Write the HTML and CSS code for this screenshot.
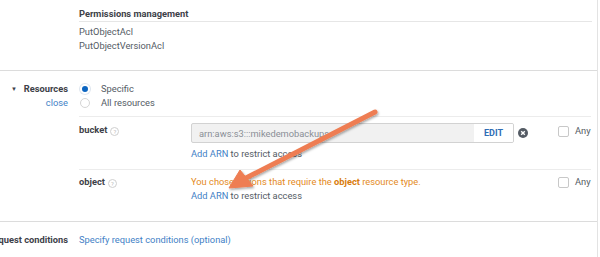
FILE: index.html
```html
<!DOCTYPE html>
<html lang="en">
<head>
<meta charset="UTF-8">
<title>Resources</title>
<link rel="stylesheet" href="styles.css">
</head>
<body>
<div class="panel">
    <div class="actions">
        <div class="actions-title">Permissions management</div>
        <ul class="actions-list">
            <li>PutObjectAcl</li>
            <li>PutObjectVersionAcl</li>
        </ul>
    </div>

    <div class="section resources">
        <div class="side">
            <div class="side-title"><span class="caret">&#9660;</span>Resources</div>
            <a class="link">close</a>
        </div>
        <div class="main">
            <div class="radios">
                <label class="radio"><span class="dot checked"></span>Specific</label>
                <label class="radio"><span class="dot"></span>All resources</label>
            </div>

            <div class="res-row bucket">
                <div class="res-name">bucket<span class="help">?</span></div>
                <div class="res-value">
                    <div class="arn-box">
                        <span class="arn-text">arn:aws:s3:::mikedemobackups</span>
                        <span class="arn-edit">EDIT</span>
                    </div>
                    <div class="hint"><a class="link">Add ARN</a> to restrict access</div>
                </div>
                <div class="remove">
                    <svg width="10" height="10" viewBox="0 0 10 10"><circle cx="5" cy="5" r="5" fill="#545b64"/><path d="M3.2 3.2 L6.8 6.8 M6.8 3.2 L3.2 6.8" stroke="#fff" stroke-width="1.4"/></svg>
                </div>
                <label class="any"><span class="box"></span>Any</label>
            </div>

            <div class="res-row object">
                <div class="res-name">object<span class="help">?</span></div>
                <div class="res-value">
                    <div class="warn">You chose actions that require the <b>object</b> resource type.</div>
                    <div class="hint"><a class="link">Add ARN</a> to restrict access</div>
                </div>
                <div class="remove"></div>
                <label class="any"><span class="box"></span>Any</label>
            </div>
        </div>
    </div>

    <div class="section conditions">
        <div class="side">
            <div class="side-title">Request conditions</div>
        </div>
        <div class="main">
            <a class="link">Specify request conditions (optional)</a>
        </div>
    </div>
</div>

<svg class="arrow" width="600" height="257" viewBox="0 0 600 257">
    <defs>
        <filter id="shade" x="-10%" y="-10%" width="120%" height="130%">
            <feDropShadow dx="1" dy="1.5" stdDeviation="1.2" flood-color="#000" flood-opacity="0.35"/>
        </filter>
    </defs>
    <g filter="url(#shade)" fill="#ee7d52" stroke="#ee7d52">
        <line x1="375" y1="112" x2="244" y2="179" stroke-width="5" stroke-linecap="round"/>
        <polygon points="229,188 240,170 253,186" stroke-width="1" stroke-linejoin="round"/>
    </g>
</svg>
</body>
</html>
```

FILE: styles.css
```css
body {
    margin: 0;
    background-color: #ffffff;
    font-family: Roboto, "Liberation Sans", Arial, sans-serif;
    font-size: 9.3px;
    line-height: 14px;
    color: #545b64;
    overflow: hidden;
}

.panel {
    width: 597px;
    height: 257px;
    border-right: 1px solid #e3e3e3;
}

.link {
    color: #3f7fc6;
    cursor: pointer;
}

/* actions list */

.actions {
    padding: 7px 0 17px 79px;
    border-bottom: 1px solid #dcdcdc;
}

.actions-title {
    font-weight: bold;
    color: #3d4148;
    margin-right: 5px;
    border-bottom: 1px solid #e6e6e6;
}

.actions-list {
    list-style: none;
    margin: 0;
    padding: 3px 0 0 0;
}

/* shared two column sections */

.section {
    display: flex;
}

.side {
    width: 68px;
    flex-shrink: 0;
    margin-right: 11px;
    display: flex;
    flex-direction: column;
    align-items: flex-end;
    white-space: nowrap;
}

.side-title {
    font-weight: bold;
    color: #3d4148;
}

.caret {
    font-size: 6px;
    margin-right: 7px;
    vertical-align: 1px;
}

.main {
    flex: 1;
}

/* resources */

.resources {
    padding-top: 11px;
    padding-bottom: 18px;
    border-bottom: 1px solid #dcdcdc;
}

.radios {
    padding-bottom: 6px;
}

.radio {
    display: flex;
    align-items: center;
}

.dot {
    width: 8px;
    height: 8px;
    border: 1px solid #d5d5d5;
    border-radius: 50%;
    margin: 0 11px 0 1px;
    box-sizing: content-box;
}

.dot.checked {
    background-color: #0b64c0;
    width: 6px;
    height: 6px;
    border-width: 2px;
    border-color: #fff;
    box-shadow: 0 0 0 1px #dfe6ef;
}

.res-row {
    display: flex;
    border-top: 1px solid #ececec;
    margin-right: 9px;
}

.res-row.bucket {
    padding: 6px 0 8px 0;
}

.res-row.object {
    padding: 5px 0 0 0;
}

.res-name {
    width: 112px;
    flex-shrink: 0;
    font-weight: bold;
    color: #3d4148;
}

.help {
    display: inline-block;
    width: 7px;
    height: 7px;
    margin-left: 3px;
    border: 1px solid #cfcfcf;
    border-radius: 50%;
    font-size: 6px;
    line-height: 7px;
    text-align: center;
    font-weight: normal;
    color: #bdbdbd;
    vertical-align: -1px;
}

.res-value {
    width: 323px;
    flex-shrink: 0;
}

.arn-box {
    display: flex;
    height: 18px;
    border: 1px solid #d2d2d2;
    border-radius: 2px;
    background-color: #f1f1f1;
    overflow: hidden;
}

.arn-text {
    flex: 1;
    padding-left: 7px;
    line-height: 19px;
    color: #8a8f96;
}

.arn-edit {
    width: 39px;
    background-color: #ffffff;
    text-align: center;
    line-height: 19px;
    font-size: 9px;
    font-weight: bold;
    color: #2f6db5;
}

.bucket .hint {
    margin-top: 4px;
}

.warn {
    color: #e48a1c;
}

.warn b {
    color: #d97c0c;
}

.remove {
    width: 10px;
    padding: 5px 0 0 4px;
}

.any {
    display: flex;
    align-items: flex-start;
    margin-left: 30px;
}

.bucket .any {
    padding-top: 1px;
}

.box {
    width: 9px;
    height: 9px;
    border: 1px solid #c8c8c8;
    border-radius: 2px;
    margin: 2px 6px 0 0;
}

/* conditions */

.conditions {
    padding-top: 11px;
}

/* annotation arrow drawn over the page */

.arrow {
    position: absolute;
    top: 0;
    left: 0;
    pointer-events: none;
}
```
